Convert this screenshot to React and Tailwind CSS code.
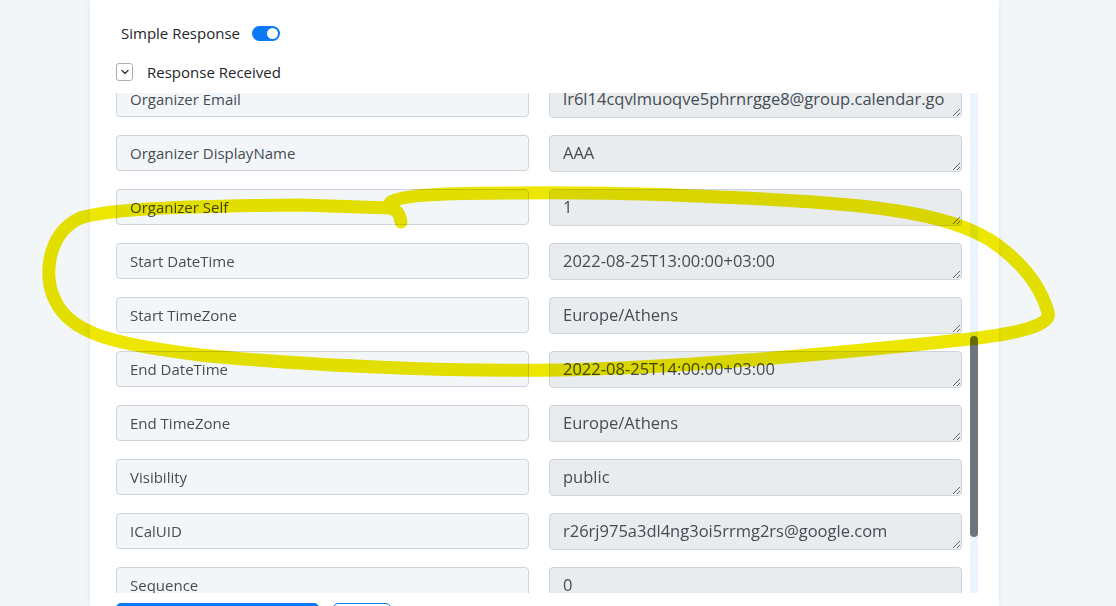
import { ChevronDown } from 'lucide-react';

const rows = [
  { label: 'Organizer Email', value: 'lr6l14cqvlmuoqve5phrnrgge8@group.calendar.google.com' },
  { label: 'Organizer DisplayName', value: 'AAA' },
  { label: 'Organizer Self', value: '1' },
  { label: 'Start DateTime', value: '2022-08-25T13:00:00+03:00' },
  { label: 'Start TimeZone', value: 'Europe/Athens' },
  { label: 'End DateTime', value: '2022-08-25T14:00:00+03:00' },
  { label: 'End TimeZone', value: 'Europe/Athens' },
  { label: 'Visibility', value: 'public' },
  { label: 'ICalUID', value: 'r26rj975a3dl4ng3oi5rrmg2rs@google.com' },
  { label: 'Sequence', value: '0' },
  { label: 'Attendees Email', value: 'someone@example.com' },
];

// freehand highlighter scribble over the start date rows
const Marker = () => (
  <svg className="pointer-events-none absolute inset-0 mix-blend-multiply" width="1116" height="606" viewBox="0 0 1116 606">
    <path
      d="M401 222 C400 214 397 210 390 208 L300 205 C200 206 110 208 80 218 C45 235 44 280 55 300 C70 335 120 345 200 355 C300 365 450 372 560 370 C700 367 850 352 960 340 C1020 334 1052 325 1048 312 C1040 285 1020 260 990 240 C960 222 920 212 850 205 C750 196 600 192 520 193 C440 193 402 195 391 202 L387 207"
      fill="none"
      stroke="#ede600"
      strokeWidth="13"
      strokeLinecap="round"
      strokeLinejoin="round"
    />
  </svg>
);

export default function App() {
  return (
    <div className="relative h-[606px] overflow-hidden bg-[#f3f6f9] text-[15px] text-[#212529]" style={{ fontFamily: '"Open Sans", "Noto Sans", sans-serif' }}>
      <div className="ml-[90px] flex h-full w-[909px] flex-col bg-white pl-[26px] pr-[21px] shadow-[0_0_5px_rgba(60,80,120,0.12)]">
        {/* Simple Response toggle */}
        <div className="mt-[22px] flex h-[22px] items-center pl-[5px]">
          <span>Simple Response</span>
          <span className="ml-[12px] flex h-[15px] w-[28px] items-center justify-end rounded-full bg-[#0b78f5] pr-[2px]">
            <span className="h-[11px] w-[11px] rounded-full bg-white" />
          </span>
        </div>

        {/* Response Received */}
        <div className="mt-[18px] flex h-[20px] items-center">
          <span className="flex h-[18px] w-[17px] items-center justify-center rounded-[3px] border border-[#a9b0b8] bg-white">
            <ChevronDown size={12} strokeWidth={2.5} className="text-[#333]" />
          </span>
          <span className="ml-[14px]">Response Received</span>
        </div>

        {/* scroll area */}
        <div className="mt-[11px] flex h-[500px] shrink-0">
          <div className="flex-1 overflow-hidden">
            <div className="-mt-[12px] grid grid-cols-2 gap-x-[20px] gap-y-[17px]">
              {rows.map((r) => (
                <div key={r.label} className="contents">
                  <input
                    readOnly
                    value={r.label}
                    className="h-[36px] rounded-[4px] border border-[#ced4da] bg-[#f3f6f9] px-[13px] text-[15px] text-[#454c53] outline-none"
                  />
                  <textarea
                    readOnly
                    value={r.value}
                    className="h-[37px] overflow-y-auto rounded-[4px] border border-[#ced4da] bg-[#e9ecef] px-[13px] py-[5px] text-[16.5px] leading-[24px] text-[#454c53] outline-none"
                  />
                </div>
              ))}
            </div>
          </div>
          <div className="ml-[8px] w-[8px] bg-[#eaf4ff]">
            <div className="mt-[243px] h-[201px] rounded-full bg-[#6c757d]" />
          </div>
        </div>

        {/* buttons */}
        <div className="mt-[10px] flex gap-[14px]">
          <button className="h-[36px] w-[203px] rounded-[5px] bg-[#0b78f5]" />
          <button className="h-[36px] w-[58px] rounded-[5px] border border-[#0b78f5]" />
        </div>
      </div>
      <Marker />
    </div>
  );
}
